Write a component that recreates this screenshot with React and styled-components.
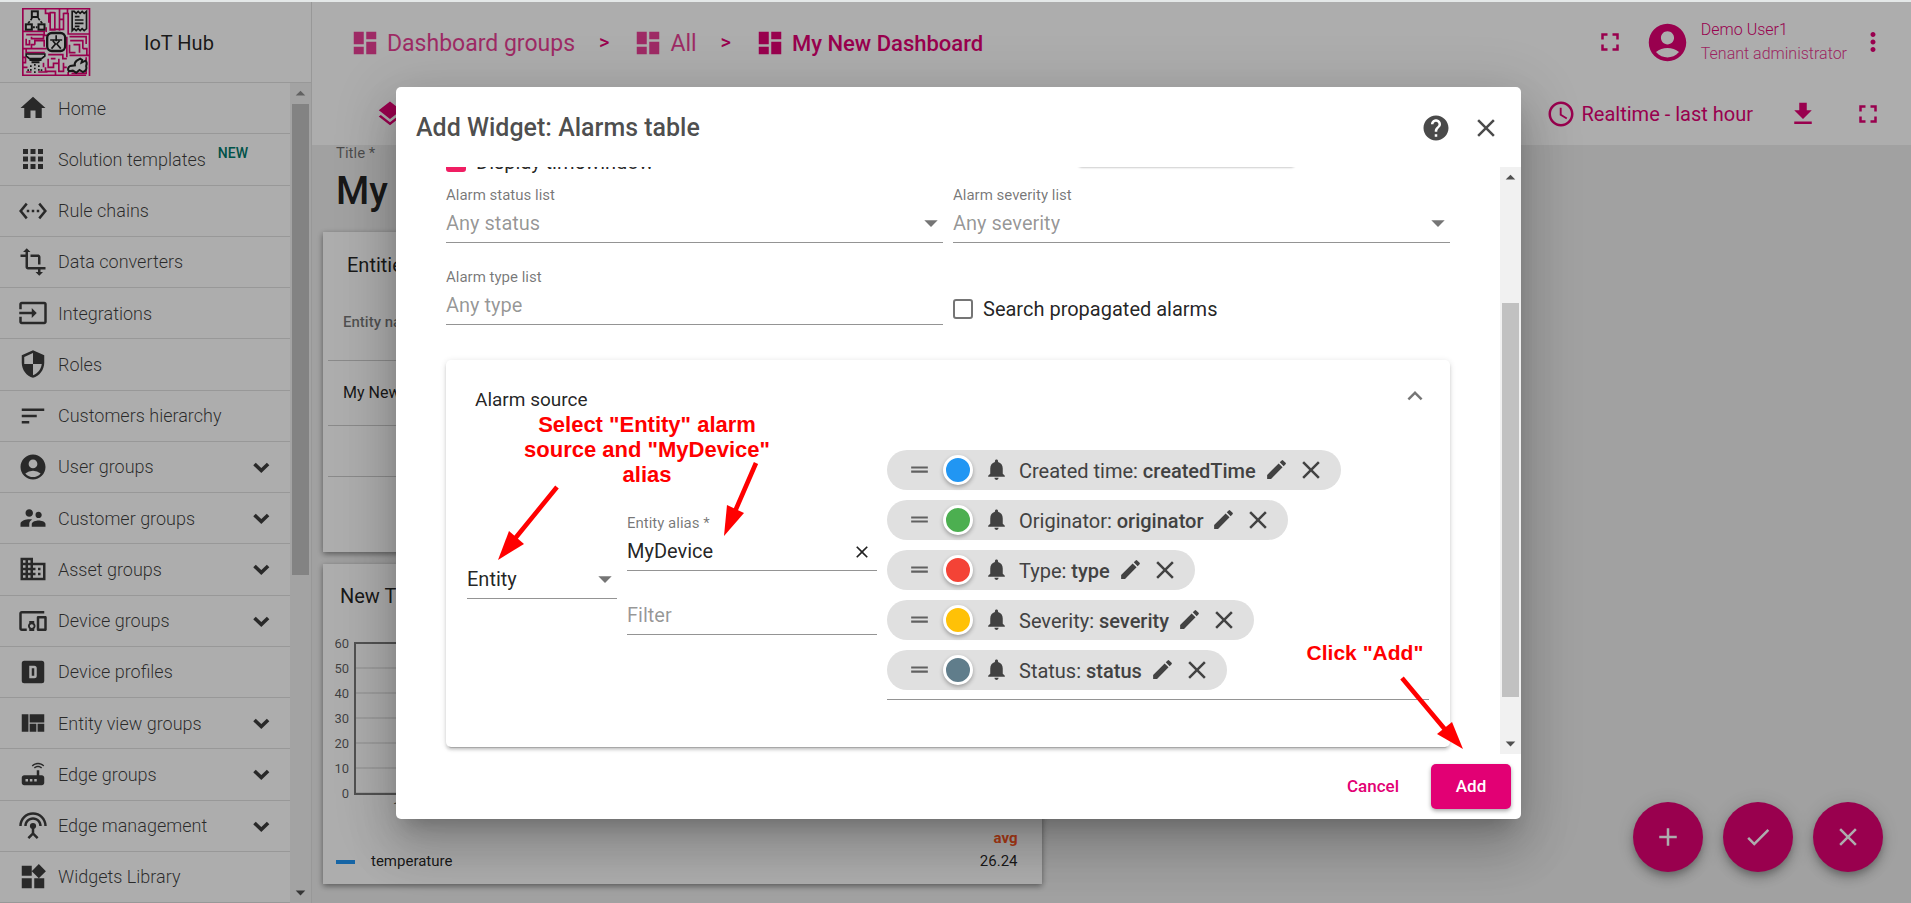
import React from "react";
import styled, { createGlobalStyle } from "styled-components";
import {
  MdAccountCircle, MdAdd, MdApps, MdArrowDropDown, MdArrowDropUp, MdCheck, MdClose, MdDashboard,
  MdDevicesOther, MdDomain, MdDragHandle, MdEdit, MdExpandLess, MdFileDownload,
  MdFullscreen, MdHelp, MdHome, MdInput, MdLayers, MdMoreVert, MdNotifications, MdQueryBuilder,
  MdRouter, MdSecurity, MdSettingsEthernet, MdSettingsInputAntenna, MdSort, MdSupervisorAccount,
  MdTransform, MdViewQuilt, MdWidgets,
} from "react-icons/md";

const PINK = "#e20074";
const LINE = "rgba(0, 0, 0, 0.12)";

const GlobalStyle = createGlobalStyle`
  * { box-sizing: border-box; }
  body { margin: 0; background: #e4e8e8; font-family: Roboto, "Liberation Sans", sans-serif; color: rgba(0, 0, 0, 0.87); }
  button, input, select { font: inherit; color: inherit; margin: 0; }
  svg { flex: none; display: block; }
`;

const Screen = styled.div`
  display: flex;
  position: relative;
  height: 100vh;
  overflow: hidden;
  border-top: 2px solid #e4e8e8;
  background: #fff;
`;

const IconButton = styled.button`
  display: flex;
  align-items: center;
  justify-content: center;
  padding: 0;
  border: 0;
  background: none;
  color: inherit;
  cursor: pointer;
`;

/* Sidebar */
const Sidebar = styled.aside`
  flex: none;
  display: flex;
  flex-direction: column;
  width: 312px;
  border-right: 1px solid #e0e0e0;
`;

const Brand = styled.header`
  flex: none;
  display: flex;
  align-items: center;
  gap: 53px;
  height: 81px;
  padding: 0 0 0 22px;
  border-bottom: 1px solid ${LINE};
  font-size: 20px;
`;

const BrandName = styled.span`
  padding-top: 2px;
`;

const MenuArea = styled.div`
  flex: 1;
  display: flex;
  min-height: 0;
`;

const Menu = styled.nav`
  flex: 1;
  display: flex;
  flex-direction: column;
  overflow: hidden;
`;

const MenuItem = styled.a`
  flex: 1;
  display: flex;
  align-items: center;
  gap: 10px;
  min-height: 50px;
  padding: 0 14px 0 18px;
  border-bottom: 1px solid ${LINE};
  color: rgba(0, 0, 0, 0.76);
  font-size: 18px;
  font-weight: 300;
  text-decoration: none;
`;

const MenuText = styled.span`
  flex: 1;
  display: flex;
  gap: 12px;
`;

const NewBadge = styled.sup`
  color: #00796b;
  font-size: 14px;
  font-weight: 500;
  line-height: 8px;
`;

const ScrollTrack = styled.div`
  flex: none;
  display: flex;
  flex-direction: column;
  align-items: center;
  width: 21px;
  background: #f1f1f1;
  color: #505050;
`;

const ScrollArrow = styled(IconButton)`
  width: 21px;
  height: 21px;
  opacity: ${(p) => (p.$faded ? 0.6 : 1)};
`;

const ScrollSpace = styled.div`
  flex: ${(p) => p.$share} 1 0;
`;

const ScrollThumb = styled.div`
  flex: ${(p) => p.$share} 1 0;
  width: 17px;
  background: #c1c1c1;
`;

/* Main area */
const Main = styled.main`
  flex: 1;
  display: flex;
  flex-direction: column;
  min-width: 0;
`;

const TopBar = styled.header`
  flex: none;
  display: flex;
  align-items: center;
  height: 80px;
  padding: 0 23px 0 38px;
  color: ${PINK};
`;

const Breadcrumbs = styled.nav`
  flex: 1;
  display: flex;
  align-items: center;
  padding-top: 2px;
`;

const Crumb = styled.a`
  display: flex;
  align-items: center;
  gap: 7px;
  color: ${PINK};
  font-size: ${(p) => (p.$current ? 22 : 23)}px;
  font-weight: ${(p) => (p.$current ? 500 : 400)};
  opacity: ${(p) => (p.$current ? 1 : 0.75)};
  text-decoration: none;
`;

const CrumbArrow = styled.span`
  padding: 0 24px;
  font-size: 20px;
  font-weight: 500;
  line-height: 20px;
  padding-bottom: 2px;
`;

const UserBlock = styled.div`
  display: flex;
  align-items: center;
  gap: 11px;
  margin: 0 11px 0 20px;
`;

const UserText = styled.div`
  display: flex;
  flex-direction: column;
  font-size: 16px;
  font-weight: 300;
  line-height: 24px;
`;

const UserRole = styled.span`
  opacity: 0.8;
`;

const DashToolbar = styled.div`
  flex: none;
  display: flex;
  align-items: center;
  justify-content: space-between;
  height: 63px;
  padding: 0 28px 0 63px;
  color: ${PINK};
`;

const ToolGroup = styled.div`
  display: flex;
  align-items: center;
  gap: 35px;
`;

const TimeButton = styled(IconButton)`
  gap: 6px;
  font-size: 20px;
`;

const Content = styled.section`
  flex: 1;
  display: flex;
  flex-direction: column;
  gap: 12px;
  padding: 0 11px;
  background: #eee;
`;

const TitleField = styled.label`
  display: flex;
  flex-direction: column;
  height: 75px;
  padding-left: 13px;
  color: rgba(0, 0, 0, 0.54);
  font-size: 15px;
  line-height: 16px;
`;

const TitleInput = styled.input`
  height: 60px;
  padding: 0;
  border: 0;
  outline: 0;
  background: none;
  color: rgba(0, 0, 0, 0.87);
  font-size: 38px;
  font-weight: 500;
`;

const WidgetCard = styled.article`
  display: flex;
  flex-direction: column;
  width: calc(50% - 70px);
  height: 320px;
  background: #fff;
  box-shadow: 0 2px 6px rgba(0, 0, 0, 0.45);
`;

const WidgetTitle = styled.h2`
  flex: none;
  margin: 0;
  padding: ${(p) => (p.$indent ? "21px 24px 8px" : "20px 17px")};
  font-size: 20px;
  font-weight: 400;
  line-height: 24px;
`;

const EntityTable = styled.table`
  margin: 0 5px;
  border-collapse: collapse;
  font-size: 16px;
`;

const HeadCell = styled.th`
  height: 75px;
  padding: 0 15px;
  border-bottom: 1px solid rgba(0, 0, 0, 0.2);
  color: rgba(0, 0, 0, 0.54);
  font-size: 15px;
  font-weight: 500;
  text-align: left;
`;

const BodyCell = styled.td`
  height: ${(p) => p.$height || 65}px;
  padding: 0 15px;
  border-bottom: 1px solid rgba(0, 0, 0, 0.2);
`;

const Chart = styled.svg`
  width: 100%;
  height: 199px;
  font-size: 13px;
  fill: rgba(0, 0, 0, 0.65);
`;

const Legend = styled.table`
  margin: 0 24px 0 13px;
  border-spacing: 0;
  font-size: 15px;
  line-height: 23px;

  th, td { padding: 0; text-align: left; }
  th:last-child, td:last-child { text-align: right; }
  th:last-child { color: #ff5722; font-weight: 700; }
`;

const SeriesName = styled.span`
  display: flex;
  align-items: center;
  gap: 16px;
`;

const SeriesMark = styled.span`
  width: 19px;
  height: 4px;
  background: #2196f3;
`;

const FabGroup = styled.div`
  position: absolute;
  right: 28px;
  bottom: 31px;
  display: flex;
  gap: 20px;
`;

const Fab = styled(IconButton)`
  width: 70px;
  height: 70px;
  border-radius: 50%;
  background: ${PINK};
  color: #fff;
  box-shadow: 0 4px 6px -1px rgba(0, 0, 0, 0.2), 0 7px 12px rgba(0, 0, 0, 0.14), 0 1px 22px rgba(0, 0, 0, 0.12);
`;

/* Dialog */
const Backdrop = styled.div`
  position: absolute;
  inset: 0;
  display: flex;
  align-items: center;
  justify-content: center;
  padding-left: 6px;
  background: rgba(0, 0, 0, 0.32);
`;

const Dialog = styled.section`
  position: relative;
  display: flex;
  flex-direction: column;
  width: 100%;
  max-width: 1125px;
  height: 732px;
  max-height: 96vh;
  border-radius: 5px;
  background: #fff;
  box-shadow: 0 14px 19px -9px rgba(0, 0, 0, 0.2), 0 30px 48px 4px rgba(0, 0, 0, 0.14), 0 11px 58px 10px rgba(0, 0, 0, 0.12);
`;

const DialogHeader = styled.header`
  flex: none;
  display: flex;
  align-items: center;
  gap: 20px;
  height: 80px;
  padding: 3px 20px 0;
  color: rgba(0, 0, 0, 0.71);
`;

const DialogTitle = styled.h1`
  flex: 1;
  margin: 0;
  font-size: 25px;
  font-weight: 500;
  line-height: 32px;
`;

const DialogBody = styled.div`
  flex: 1;
  display: flex;
  min-height: 0;
  overflow: hidden;
`;

const ScrollView = styled.div`
  flex: 1;
  overflow: hidden;
`;

const Settings = styled.form`
  margin-top: -40px;
  padding: 0 50px;
`;

const SettingsGrid = styled.div`
  display: grid;
  grid-template-columns: 1fr 1fr;
  column-gap: 10px;
`;

const CheckRow = styled.label`
  display: flex;
  align-items: center;
  gap: 10px;
  height: ${(p) => p.$height}px;
  padding-top: ${(p) => (p.$height > 60 ? 18 : 20)}px;
  font-size: 20px;
`;

const Checkbox = styled.input`
  appearance: none;
  flex: none;
  width: 20px;
  height: 20px;
  border: 2px solid rgba(0, 0, 0, 0.54);
  border-radius: 3px;

  &:checked {
    border-color: #f01e63;
    background: #f01e63;
  }
`;

const TimewindowBox = styled.div`
  width: 219px;
  height: 40px;
  margin-left: 124px;
  border-radius: 5px;
  box-shadow: 0 1px 2px rgba(0, 0, 0, 0.2);
`;

const Field = styled.label`
  display: flex;
  flex-direction: column;
  gap: 7px;
  padding-top: ${(p) => (p.$compact ? 0 : 9)}px;
  margin-bottom: ${(p) => (p.$compact ? 0 : 16)}px;
`;

const FieldLabel = styled.span`
  color: rgba(0, 0, 0, 0.54);
  font-size: 15px;
  line-height: 18px;
`;

const Control = styled.span`
  display: grid;
  align-items: center;
  padding-bottom: 7px;
  border-bottom: 1px solid rgba(0, 0, 0, 0.42);
  color: ${(p) => (p.$muted ? "rgba(0, 0, 0, 0.42)" : "rgba(0, 0, 0, 0.87)")};
  font-size: 20px;

  & > * { grid-area: 1 / 1; }
  & > :nth-child(2) { justify-self: end; }
`;

const TextInput = styled.input`
  width: 100%;
  height: 24px;
  padding: 0;
  border: 0;
  outline: 0;
  background: none;

  &::placeholder { color: rgba(0, 0, 0, 0.42); opacity: 1; }
`;

const Select = styled.select`
  appearance: none;
  width: 100%;
  height: 24px;
  padding: 0;
  border: 0;
  outline: 0;
  background: none;
`;

const SelectArrow = styled(MdArrowDropDown)`
  width: 32px;
  height: 32px;
  margin: -4px;
  color: rgba(0, 0, 0, 0.54);
  pointer-events: none;
`;

const ClearButton = styled(IconButton)`
  width: 20px;
  margin: 2px 5px 0 0;
`;

const SourcePanel = styled.section`
  margin-top: 19px;
  padding-bottom: 47px;
  border-radius: 5px;
  box-shadow: 0 4px 1px -3px rgba(0, 0, 0, 0.2), 0 3px 3px rgba(0, 0, 0, 0.14), 0 1px 6px rgba(0, 0, 0, 0.12);
`;

const PanelHeader = styled.header`
  display: flex;
  align-items: center;
  justify-content: space-between;
  height: 78px;
  padding: 2px 20px 0 29px;
`;

const PanelTitle = styled.h3`
  margin: 0;
  font-size: 19px;
  font-weight: 400;
`;

const CollapseButton = styled(IconButton)`
  align-self: flex-start;
  height: 68px;
  color: rgba(0, 0, 0, 0.54);
`;

const SourceRow = styled.div`
  display: grid;
  grid-template-columns: 150px 250px 1fr;
  align-items: center;
  column-gap: 10px;
  padding: 12px 21px 0;
`;

const TypeCell = styled.div`
  padding-top: 16px;
`;

const AliasCell = styled.div`
  display: flex;
  flex-direction: column;
  gap: 32px;
`;

const KeyList = styled.ul`
  display: flex;
  flex-direction: column;
  align-items: flex-start;
  gap: 10px;
  margin: 0;
  padding: 0 0 9px;
  border-bottom: 1px solid rgba(0, 0, 0, 0.42);
  list-style: none;
`;

const KeyChip = styled.li`
  display: flex;
  align-items: center;
  height: 40px;
  padding: 0 15px 0 20px;
  border-radius: 20px;
  background: #e0e0e0;
  color: #424242;
  font-size: 20px;
`;

const DragIcon = styled(MdDragHandle)`
  color: #616161;
`;

const ColorDot = styled.span`
  width: 30px;
  height: 30px;
  margin: 0 11px;
  border: 3px solid #fff;
  border-radius: 50%;
  background: ${(p) => p.$color};
  box-shadow: 0 2px 4px rgba(0, 0, 0, 0.3);
`;

const KeyText = styled.span`
  margin: 0 8px 0 10px;
  padding-top: 2px;

  b { font-weight: 500; }
`;

const KeyActions = styled.span`
  display: flex;
  align-items: center;
  gap: 7px;
`;

const DialogFooter = styled.footer`
  flex: none;
  display: flex;
  align-items: center;
  justify-content: flex-end;
  gap: 11px;
  height: 65px;
  padding: 0 10px;
`;

const ActionButton = styled.button`
  height: 45px;
  padding: 0;
  width: ${(p) => (p.$primary ? 80 : 94)}px;
  border: 0;
  border-radius: 5px;
  background: ${(p) => (p.$primary ? PINK : "none")};
  color: ${(p) => (p.$primary ? "#fff" : PINK)};
  box-shadow: ${(p) => (p.$primary ? "0 2px 4px rgba(0, 0, 0, 0.35)" : "none")};
  font-size: 17px;
  font-weight: 500;
`;

/* Tutorial notes drawn over the dialog */
const Note = styled.p`
  position: absolute;
  left: ${(p) => p.$x}px;
  top: ${(p) => p.$y}px;
  width: ${(p) => p.$width}px;
  margin: 0;
  color: #f00;
  font: 700 ${(p) => p.$size}px/25px "Liberation Sans", sans-serif;
  text-align: center;
  pointer-events: none;
`;

const Arrows = styled.svg`
  position: absolute;
  left: 0;
  top: 0;
  width: 1125px;
  height: 732px;
  fill: #f00;
  stroke: #f00;
  stroke-width: 4.6;
  pointer-events: none;

  polygon { stroke: none; }
`;

const MENU = [
  ["Home", MdHome],
  ["Solution templates", MdApps, { badge: "NEW" }],
  ["Rule chains", MdSettingsEthernet],
  ["Data converters", MdTransform],
  ["Integrations", MdInput],
  ["Roles", MdSecurity],
  ["Customers hierarchy", MdSort],
  ["User groups", MdAccountCircle, { group: true }],
  ["Customer groups", MdSupervisorAccount, { group: true }],
  ["Asset groups", MdDomain, { group: true }],
  ["Device groups", MdDevicesOther, { group: true }],
  ["Device profiles", ProfileIcon],
  ["Entity view groups", MdViewQuilt, { group: true }],
  ["Edge groups", MdRouter, { group: true }],
  ["Edge management", MdSettingsInputAntenna, { group: true }],
  ["Widgets Library", MdWidgets],
];

const KEYS = [
  ["Created time", "createdTime", "#2196f3"],
  ["Originator", "originator", "#4caf50"],
  ["Type", "type", "#f44336"],
  ["Severity", "severity", "#ffc107"],
  ["Status", "status", "#607d8b"],
];

function ProfileIcon({ size }) {
  return (
    <svg width={size} height={size} viewBox="0 0 24 24" fill="currentColor" aria-hidden="true">
      <path fillRule="evenodd" d="M5 3h14a2 2 0 0 1 2 2v14a2 2 0 0 1-2 2H5a2 2 0 0 1-2-2V5a2 2 0 0 1 2-2m4 4v10h4a2 2 0 0 0 2-2V9a2 2 0 0 0-2-2H9m2 2h2v6h-2V9z" />
    </svg>
  );
}

function GroupChevron() {
  return (
    <svg width="30" height="30" viewBox="0 0 30 30" fill="none" stroke="currentColor" strokeWidth="3.6" aria-hidden="true">
      <path d="M8.5 12L15.3 18.6L22.1 12" />
    </svg>
  );
}

function Logo() {
  return (
    <svg width="69" height="68" viewBox="12 12 206 204" fill="none" aria-hidden="true">
      <g stroke={PINK} strokeWidth="5">
        <path d="M14 12V214H204M12 14H212M214 12V216" />
        <path d="M14 82H78V94H88M82 14V28H92V56M84 70V84M96 26V78H110V24M110 26H94M124 14V80M136 26V76H98M136 28H148V14M150 26V90H214M124 46H136" />
        <path d="M24 92H76V104H40V98M24 104V122H34V108M14 134H86M24 134V146H80M50 122V110H78V128M50 122H40V134" />
        <path d="M154 98H204V120M156 110H194V134M166 122H184V146M154 122V146H172M154 154H214M194 134H206V154M146 98V160" />
        <path d="M90 152H134V164H146M90 164V190H106V178H122V164M98 164H112M82 190V202H112V214M122 178V202H136V176M136 190H146M14 160H22V176H14M14 190H28M76 176V190M24 204H40M60 204H88M150 214V204M160 208H204V160" />
      </g>
      <g stroke="#222" strokeWidth="6">
        <rect x="41" y="22" width="18" height="17" />
        <rect x="23" y="61" width="18" height="16" />
        <rect x="61" y="61" width="18" height="16" />
        <path d="M42 42L30 58M60 42L72 58" strokeDasharray="8 4" strokeWidth="5" />
        <path d="M44 70H58" strokeDasharray="6 3" />
      </g>
      <g stroke="#222" strokeWidth="5">
        <path fill="#fff" d="M162 22V80L168 74L174 80L180 74L186 80L192 74L198 80L205 74V22L198 28L192 22L186 28L180 22L174 28L168 22Z" />
        <path d="M170 38H184M170 48H196M170 58H196M170 67H184" />
      </g>
      <rect x="87" y="87" width="54" height="54" rx="14" fill="#fff" stroke="#222" strokeWidth="7" />
      <path d="M114 94V112M96 108H132M104 110L112 120L100 134M124 110L116 120L128 134" stroke="#222" strokeWidth="5" />
      <g stroke="#222" strokeWidth="5">
        <path fill="#fff" d="M24 150H80V156L70 164H34L24 156Z" />
        <path d="M34 168H70M40 175H64" strokeWidth="6" />
        <path d="M50 180V208M38 184V206M62 184V206M30 196V206M70 196V206" strokeDasharray="5 6" />
      </g>
      <path fill="#fff" stroke="#222" strokeWidth="6" d="M152 202Q146 192 156 186L170 184Q168 176 176 170L186 164L192 168L190 176L202 170Q208 176 204 186Q208 200 194 204L184 198L174 206L164 200Z" />
    </svg>
  );
}

function Scrollbar({ before, thumb, after, atTop }) {
  return (
    <ScrollTrack>
      <ScrollArrow type="button" $faded={atTop} aria-label="Scroll up"><MdArrowDropUp size={23} /></ScrollArrow>
      <ScrollSpace $share={before} />
      <ScrollThumb $share={thumb} />
      <ScrollSpace $share={after} />
      <ScrollArrow type="button" aria-label="Scroll down"><MdArrowDropDown size={23} /></ScrollArrow>
    </ScrollTrack>
  );
}

function TemperatureChart() {
  return (
    <Chart role="img" aria-label="Temperature">
      {[60, 50, 40, 30, 20, 10, 0].map((v, i) => (
        <React.Fragment key={v}>
          <text x="26" y={20 + i * 25} textAnchor="end">{v}</text>
          <line x1="32" x2="97%" y1={15 + i * 25} y2={15 + i * 25} stroke="#d0d0d0" strokeWidth="1" />
        </React.Fragment>
      ))}
      <path d="M800 15H32V166H800" fill="none" stroke="#7a7a7a" strokeWidth="2" />
      <text x="70" y="183">17:22</text>
    </Chart>
  );
}

export default function App() {
  return (
    <Screen>
      <GlobalStyle />
      <Sidebar>
        <Brand><Logo /><BrandName>IoT Hub</BrandName></Brand>
        <MenuArea>
          <Menu>
            {MENU.map(([text, Icon, opts = {}]) => (
              <MenuItem href="#" key={text}>
                <Icon size={30} />
                <MenuText>{text}{opts.badge && <NewBadge>{opts.badge}</NewBadge>}</MenuText>
                {opts.group && <GroupChevron />}
              </MenuItem>
            ))}
          </Menu>
          <Scrollbar before={0} thumb={471} after={307} atTop />
        </MenuArea>
      </Sidebar>

      <Main>
        <TopBar>
          <Breadcrumbs>
            <Crumb href="#"><MdDashboard size={30} />Dashboard groups</Crumb>
            <CrumbArrow>&gt;</CrumbArrow>
            <Crumb href="#"><MdDashboard size={30} />All</Crumb>
            <CrumbArrow>&gt;</CrumbArrow>
            <Crumb href="#" $current><MdDashboard size={30} />My New Dashboard</Crumb>
          </Breadcrumbs>
          <IconButton aria-label="Fullscreen"><MdFullscreen size={30} /></IconButton>
          <UserBlock>
            <MdAccountCircle size={45} />
            <UserText><span>Demo User1</span><UserRole>Tenant administrator</UserRole></UserText>
          </UserBlock>
          <IconButton aria-label="User menu"><MdMoreVert size={30} /></IconButton>
        </TopBar>
        <DashToolbar>
          <IconButton aria-label="Layouts"><MdLayers size={30} /></IconButton>
          <ToolGroup>
            <TimeButton><MdQueryBuilder size={30} />Realtime - last hour</TimeButton>
            <IconButton aria-label="Export"><MdFileDownload size={30} /></IconButton>
            <IconButton aria-label="Expand"><MdFullscreen size={30} /></IconButton>
          </ToolGroup>
        </DashToolbar>
        <Content>
          <TitleField>Title *<TitleInput defaultValue="My New Dashboard" /></TitleField>
          <WidgetCard>
            <WidgetTitle $indent>Entities</WidgetTitle>
            <EntityTable>
              <thead><tr><HeadCell>Entity name</HeadCell></tr></thead>
              <tbody>
                <tr><BodyCell>My New Device</BodyCell></tr>
                <tr><BodyCell $height={51} /></tr>
              </tbody>
            </EntityTable>
          </WidgetCard>
          <WidgetCard>
            <WidgetTitle>New Timeseries</WidgetTitle>
            <TemperatureChart />
            <Legend>
              <thead><tr><th /><th>avg</th></tr></thead>
              <tbody><tr><td><SeriesName><SeriesMark />temperature</SeriesName></td><td>26.24</td></tr></tbody>
            </Legend>
          </WidgetCard>
        </Content>
        <FabGroup>
          <Fab aria-label="Add widget"><MdAdd size={30} /></Fab>
          <Fab aria-label="Apply changes"><MdCheck size={30} /></Fab>
          <Fab aria-label="Cancel changes"><MdClose size={30} /></Fab>
        </FabGroup>
      </Main>

      <Backdrop>
        <Dialog role="dialog" aria-labelledby="dialog-title">
          <DialogHeader>
            <DialogTitle id="dialog-title">Add Widget: Alarms table</DialogTitle>
            <IconButton aria-label="Help"><MdHelp size={30} /></IconButton>
            <IconButton aria-label="Close"><MdClose size={30} /></IconButton>
          </DialogHeader>
          <DialogBody>
            <ScrollView>
              <Settings>
                <SettingsGrid>
                  <CheckRow $height={50}><Checkbox type="checkbox" defaultChecked />Display timewindow</CheckRow>
                  <TimewindowBox />
                  <Field>
                    <FieldLabel>Alarm status list</FieldLabel>
                    <Control $muted><Select><option>Any status</option></Select><SelectArrow /></Control>
                  </Field>
                  <Field>
                    <FieldLabel>Alarm severity list</FieldLabel>
                    <Control $muted><Select><option>Any severity</option></Select><SelectArrow /></Control>
                  </Field>
                  <Field>
                    <FieldLabel>Alarm type list</FieldLabel>
                    <Control $muted><TextInput placeholder="Any type" /></Control>
                  </Field>
                  <CheckRow $height={82}><Checkbox type="checkbox" />Search propagated alarms</CheckRow>
                </SettingsGrid>
                <SourcePanel>
                  <PanelHeader>
                    <PanelTitle>Alarm source</PanelTitle>
                    <CollapseButton type="button" aria-label="Collapse"><MdExpandLess size={30} /></CollapseButton>
                  </PanelHeader>
                  <SourceRow>
                    <TypeCell>
                      <Control><Select aria-label="Source type"><option>Entity</option></Select><SelectArrow /></Control>
                    </TypeCell>
                    <AliasCell>
                      <Field $compact>
                        <FieldLabel>Entity alias *</FieldLabel>
                        <Control>
                          <TextInput defaultValue="MyDevice" />
                          <ClearButton type="button" aria-label="Clear"><MdClose size={20} /></ClearButton>
                        </Control>
                      </Field>
                      <Control $muted><TextInput aria-label="Filter" placeholder="Filter" /></Control>
                    </AliasCell>
                    <KeyList>
                      {KEYS.map(([label, key, color]) => (
                        <KeyChip key={key}>
                          <DragIcon size={25} />
                          <ColorDot $color={color} />
                          <MdNotifications size={25} />
                          <KeyText>{label}: <b>{key}</b></KeyText>
                          <KeyActions>
                            <IconButton type="button" aria-label={`Edit ${key}`}><MdEdit size={25} /></IconButton>
                            <IconButton type="button" aria-label={`Remove ${key}`}><MdClose size={30} /></IconButton>
                          </KeyActions>
                        </KeyChip>
                      ))}
                    </KeyList>
                  </SourceRow>
                </SourcePanel>
              </Settings>
            </ScrollView>
            <Scrollbar before={115} thumb={394} after={36} />
          </DialogBody>
          <DialogFooter>
            <ActionButton type="button">Cancel</ActionButton>
            <ActionButton type="button" $primary>Add</ActionButton>
          </DialogFooter>
          <Note $x={121} $y={325} $width={260} $size={22}>Select "Entity" alarm source and "MyDevice" alias</Note>
          <Note $x={899} $y={553} $width={140} $size={21}>Click "Add"</Note>
          <Arrows aria-hidden="true">
            <path d="M161 400L117 454M360 376L337 429M1006 591L1052 646" />
            <polygon points="102,473 113,444 128,457" />
            <polygon points="328,449 331,418 348,426" />
            <polygon points="1067,662 1041,647 1056,635" />
          </Arrows>
        </Dialog>
      </Backdrop>
    </Screen>
  );
}
